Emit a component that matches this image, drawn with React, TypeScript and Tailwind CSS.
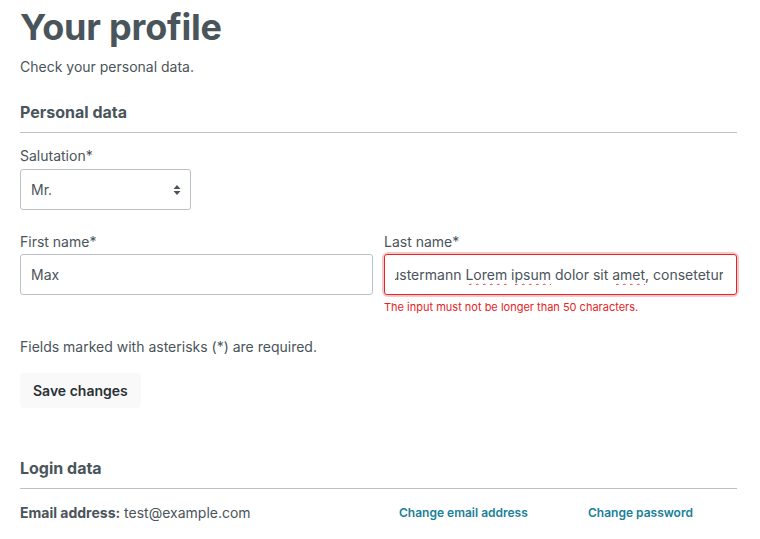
import React from "react";

function Label({ children }: { children: React.ReactNode }) {
  return <label className="mb-[3px] block text-[14px] leading-[21px]">{children}</label>;
}

function SelectArrow() {
  return (
    <svg width="8" height="12" viewBox="0 0 8 12" className="text-[#4a545b]">
      <path d="M4 1 L7.5 5 H0.5 Z" fill="currentColor" />
      <path d="M4 11 L7.5 7 H0.5 Z" fill="currentColor" />
    </svg>
  );
}

const inputBox =
  "flex h-[41px] items-center rounded-[3px] border border-[#bcc1c7] bg-white px-[10px] text-[14px]";

const spell = "underline decoration-[#e53935] decoration-wavy decoration-1 underline-offset-[3px]";

export default function App() {
  return (
    <div
      className="min-h-[539px] bg-white pl-5 pr-[23px] text-[#4a545b]"
      style={{ fontFamily: "Inter, 'Noto Sans', sans-serif" }}
    >
      <h1 className="pt-[3px] text-[36px] font-bold leading-[48px] tracking-[-0.2px]">Your profile</h1>
      <p className="mt-[5px] text-[14px] leading-[21px]">Check your personal data.</p>

      <h2 className="mt-[23px] text-[16px] font-bold leading-[24px]">Personal data</h2>
      <div className="mt-[8px] border-t border-[#bcc1c7]" />

      <div className="mt-[12px]">
        <Label>Salutation*</Label>
        <div className={`${inputBox} w-[171px] justify-between pr-[9px]`}>
          <span>Mr.</span>
          <SelectArrow />
        </div>
      </div>

      <div className="mt-[21px] grid grid-cols-2 gap-x-[11px]">
        <div>
          <Label>First name*</Label>
          <div className={`${inputBox} -mt-px`}>Max</div>
        </div>
        <div>
          <Label>Last name*</Label>
          <div className="-mt-px rounded-[4px] shadow-[0_0_0_2px_rgba(229,36,39,0.25)]">
            <div className={`${inputBox} border-[#e52427] pr-[13px]`}>
              <div className="flex min-w-0 flex-1 justify-end overflow-hidden whitespace-nowrap">
                <span className="mr-[-1px]">
                  Mustermann <span className={spell}>Lorem</span> <span className={spell}>ipsum</span> dolor sit{" "}
                  <span className={spell}>amet</span>, consetetur
                </span>
              </div>
            </div>
          </div>
          <p className="mt-[4px] text-[11px] leading-[16px] text-[#e52427]">
            The input must not be longer than 50 characters.
          </p>
        </div>
      </div>

      <p className="mt-[21px] text-[14px] leading-[21px]">Fields marked with asterisks (*) are required.</p>

      <button
        type="button"
        className="mt-[16px] h-[35px] rounded-[4px] bg-[#f9f9f9] px-[13px] text-[14px] font-semibold text-[#2b3136]"
      >
        Save changes
      </button>

      <h2 className="mt-[48px] text-[16px] font-bold leading-[24px]">Login data</h2>
      <div className="mt-[8px] border-t border-[#bcc1c7]" />

      <div className="mt-[13px] grid grid-cols-[379px_189px_1fr] items-center text-[14px] leading-[21px]">
        <div>
          <span className="font-bold">Email address:</span> test@example.com
        </div>
        <a className="text-[12px] font-semibold text-[#1a7f98]">Change email address</a>
        <a className="text-[12px] font-semibold text-[#1a7f98]">Change password</a>
      </div>
    </div>
  );
}
